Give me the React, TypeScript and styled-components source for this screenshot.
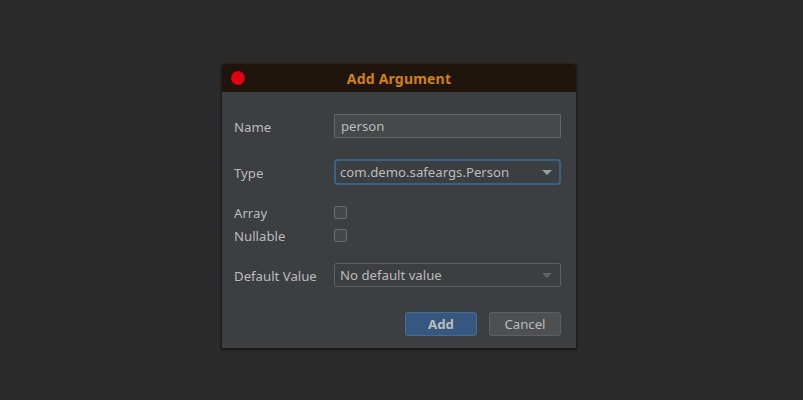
import React from "react";
import styled, { createGlobalStyle } from "styled-components";

const Global = createGlobalStyle`
  html, body { margin: 0; padding: 0; background: #2b2b2b; }
  body { width: 803px; height: 400px; font-family: "Noto Sans", "Open Sans", sans-serif; }
  #root { width: 803px; height: 400px; }
`;

const Page = styled.div`
  width: 803px;
  height: 400px;
  display: flex;
  justify-content: flex-start;
  align-items: flex-start;
  padding: 63px 0 0 221px;
  box-sizing: border-box;
  background: #2b2b2b;
`;

const Dialog = styled.div`
  width: 356px;
  background: #3c3f41;
  border: 1px solid #1d1d1d;
  border-top-color: #2a2219;
  border-radius: 4px 4px 0 0;
  box-shadow: 0 1px 2px rgba(0, 0, 0, 0.5);
  box-sizing: border-box;
  overflow: hidden;
`;

const TitleBar = styled.div`
  position: relative;
  height: 28px;
  background: #1f150c;
  display: flex;
  align-items: center;
  justify-content: center;
`;

const CloseDot = styled.span`
  position: absolute;
  left: 9px;
  top: 7px;
  width: 14px;
  height: 14px;
  border-radius: 50%;
  background: #df0010;
`;

const Title = styled.div`
  color: #d2820f;
  font-weight: 700;
  font-size: 14px;
  letter-spacing: 0.2px;
`;

const Body = styled.div`
  padding: 22px 14px 12px 12px;
  display: flex;
  flex-direction: column;
`;

const Row = styled.div<{ $top: number; $h: number }>`
  display: grid;
  grid-template-columns: 100px 227px;
  align-items: center;
  margin-top: ${(p) => p.$top}px;
  height: ${(p) => p.$h}px;
`;

const Label = styled.div`
  color: #bbbbbb;
  font-size: 13.2px;
  padding-top: 1px;
`;

const TextField = styled.div`
  height: 24px;
  box-sizing: border-box;
  background: #45494a;
  border: 1px solid #646464;
  color: #bbbbbb;
  font-size: 13.2px;
  display: flex;
  align-items: center;
  padding-left: 6px;
`;

const Combo = styled.div<{ $focused?: boolean }>`
  height: ${(p) => (p.$focused ? 26 : 24)}px;
  box-sizing: border-box;
  background: #3c3f41;
  border: ${(p) => (p.$focused ? "2px solid #3d6185" : "1px solid #5e6060")};
  border-radius: ${(p) => (p.$focused ? 4 : 2)}px;
  color: #bbbbbb;
  font-size: 13.2px;
  display: flex;
  align-items: center;
  justify-content: space-between;
  padding: 0 ${(p) => (p.$focused ? 7 : 8)}px 0 ${(p) => (p.$focused ? 4 : 5)}px;
`;

const Arrow = styled.span<{ $dim?: boolean }>`
  width: 0;
  height: 0;
  border-left: 5px solid transparent;
  border-right: 5px solid transparent;
  border-top: 5px solid ${(p) => (p.$dim ? "#5f6365" : "#9a9da0")};
`;

const Check = styled.span`
  width: 13px;
  height: 13px;
  box-sizing: border-box;
  border: 1px solid #6b6b6b;
  border-radius: 2px;
  background: #43494a;
`;

const Buttons = styled.div`
  display: flex;
  justify-content: flex-end;
  gap: 12px;
  margin-top: 25px;
  padding-right: 1px;
`;

const Button = styled.button<{ $primary?: boolean }>`
  width: 72px;
  height: 24px;
  box-sizing: border-box;
  border-radius: 3px;
  font-family: inherit;
  font-size: 13.2px;
  color: #bbbbbb;
  font-weight: ${(p) => (p.$primary ? 700 : 400)};
  background: ${(p) => (p.$primary ? "#365880" : "#4c5052")};
  border: 1px solid ${(p) => (p.$primary ? "#4a6a8e" : "#5e6060")};
  padding: 0;
`;

export default function App() {
  return (
    <>
      <Global />
      <Page>
        <Dialog>
          <TitleBar>
            <CloseDot />
            <Title>Add Argument</Title>
          </TitleBar>
          <Body>
            <Row $top={0} $h={24}>
              <Label>Name</Label>
              <TextField>person</TextField>
            </Row>
            <Row $top={21} $h={26}>
              <Label>Type</Label>
              <Combo $focused>
                <span>com.demo.safeargs.Person</span>
                <Arrow />
              </Combo>
            </Row>
            <Row $top={18} $h={18}>
              <Label>Array</Label>
              <Check />
            </Row>
            <Row $top={5} $h={18}>
              <Label>Nullable</Label>
              <Check />
            </Row>
            <Row $top={19} $h={24}>
              <Label>Default Value</Label>
              <Combo>
                <span>No default value</span>
                <Arrow $dim />
              </Combo>
            </Row>
            <Buttons>
              <Button $primary>Add</Button>
              <Button>Cancel</Button>
            </Buttons>
          </Body>
        </Dialog>
      </Page>
    </>
  );
}
